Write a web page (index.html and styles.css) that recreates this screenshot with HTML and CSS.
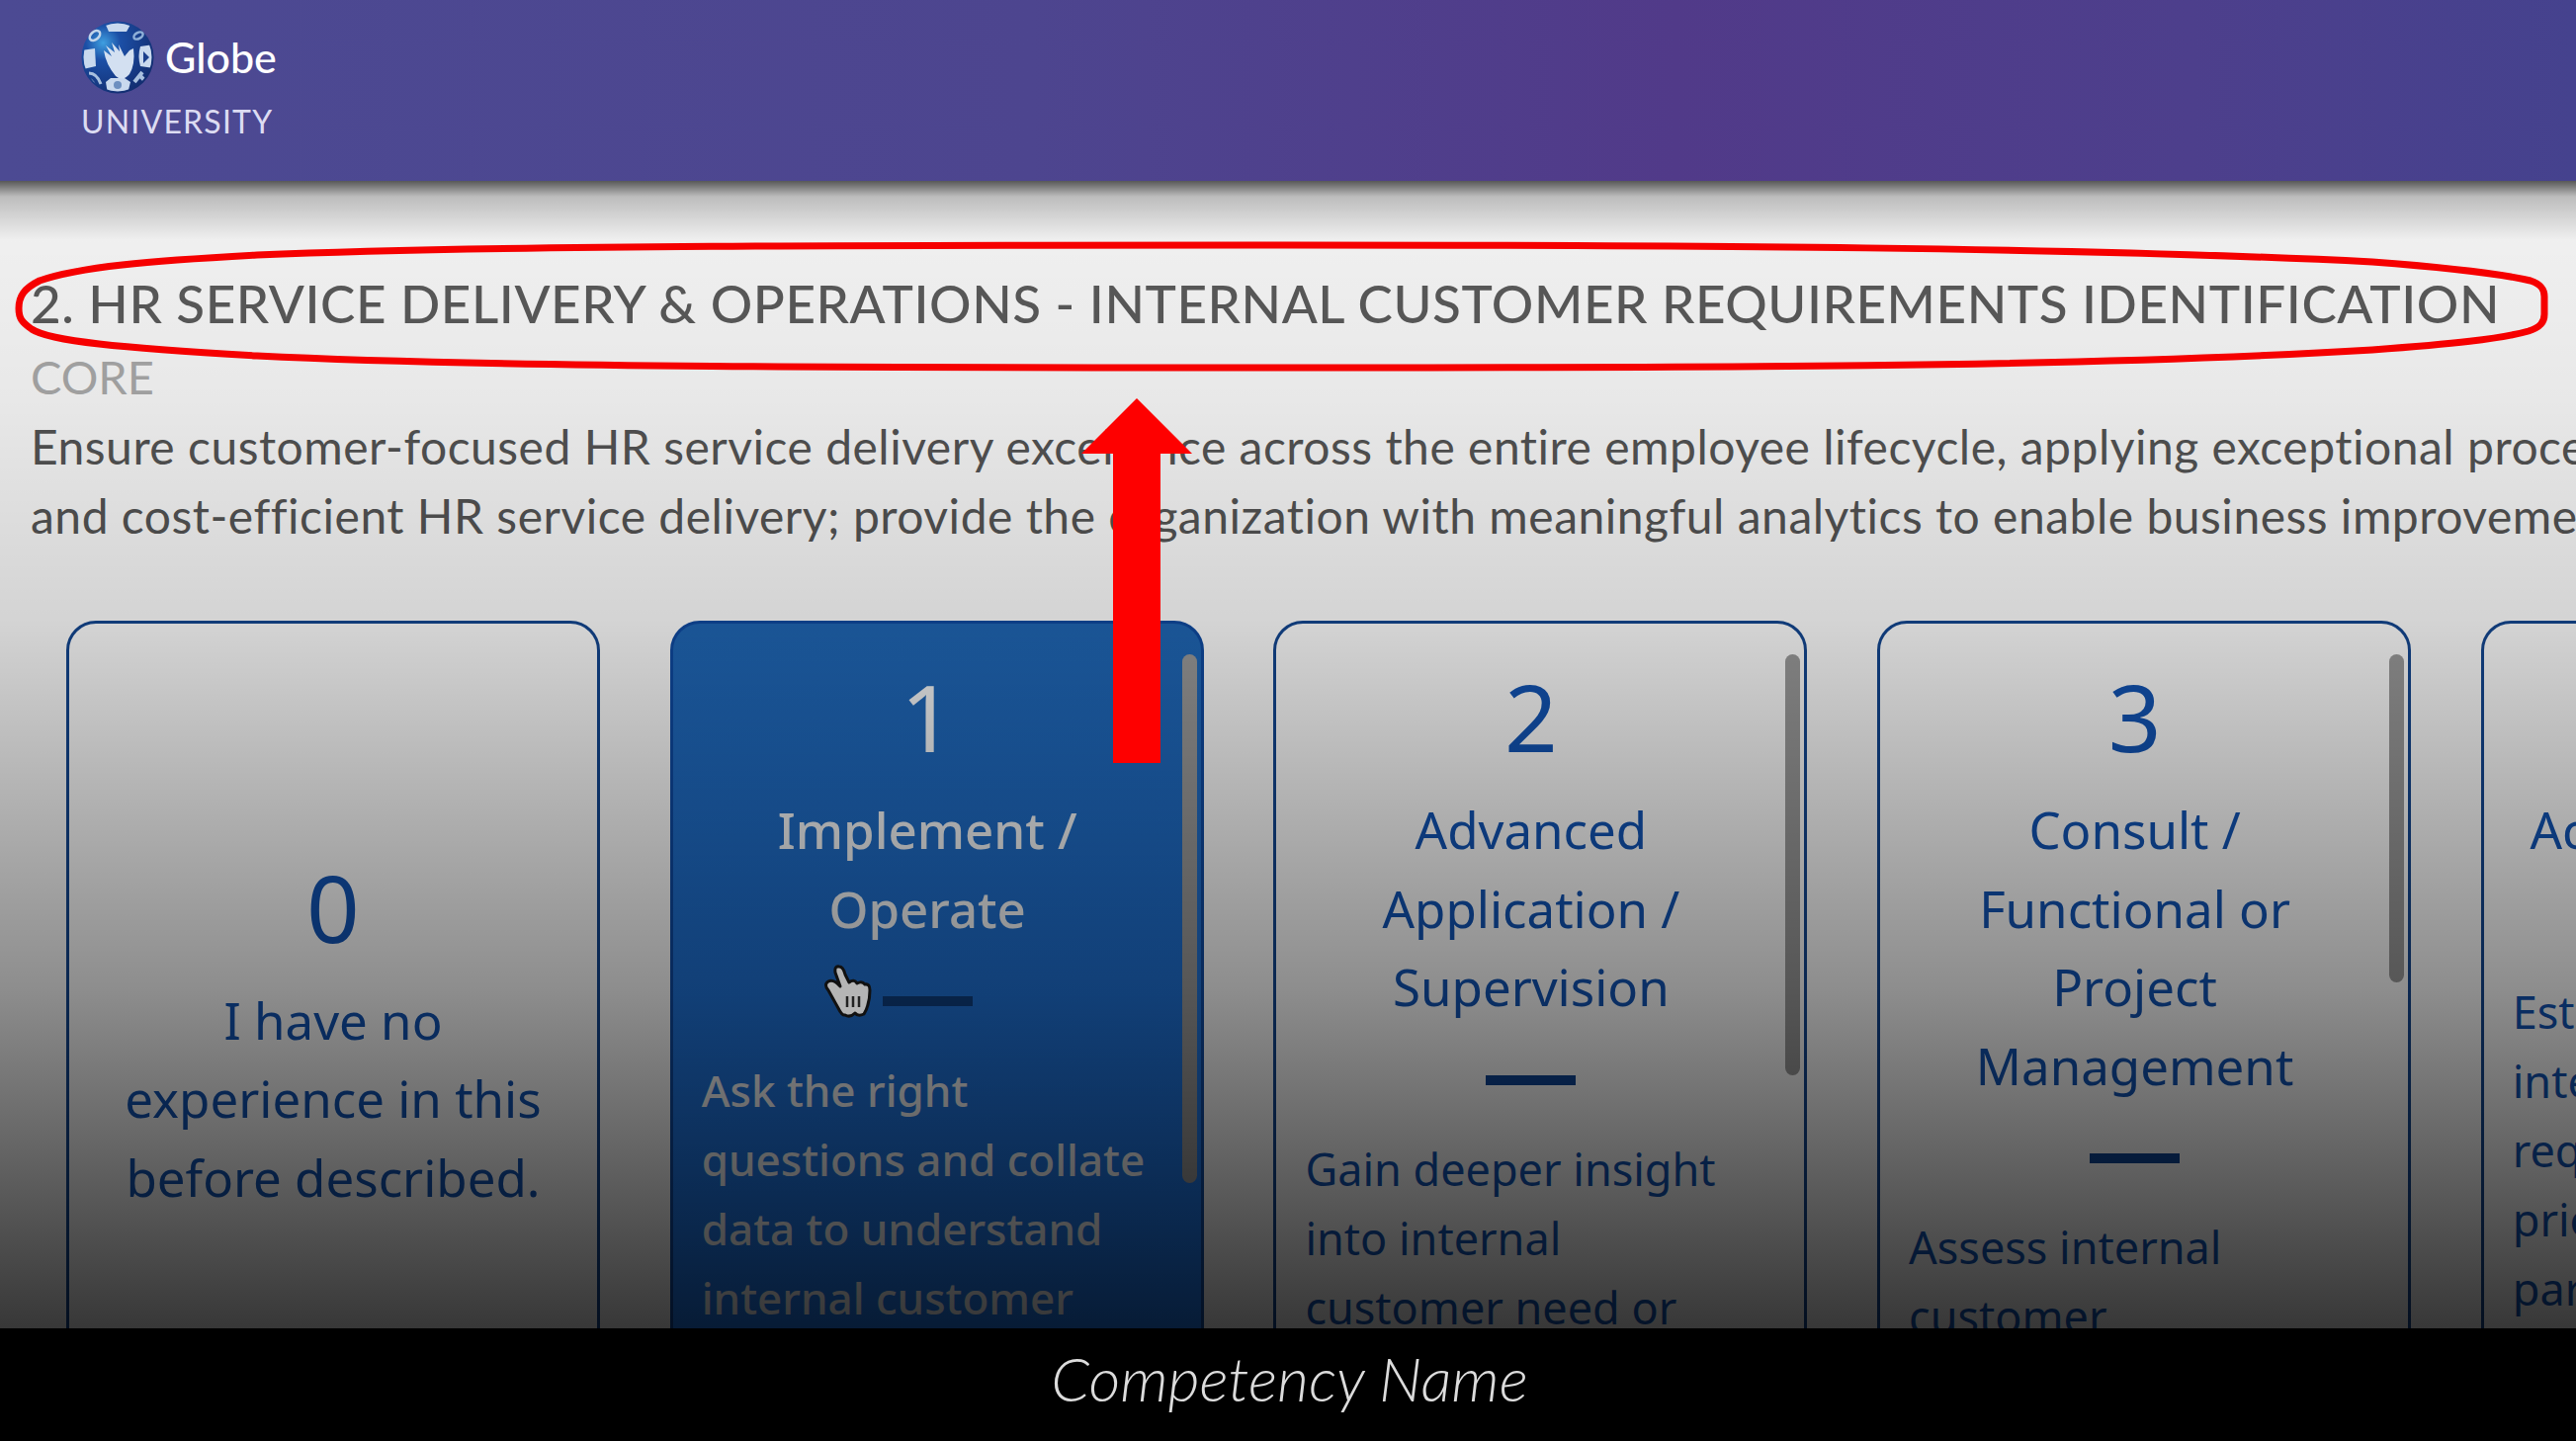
FILE: index.html
```html
<!DOCTYPE html>
<html lang="en">
<head>
    <meta charset="UTF-8">
    <title>Globe University - Competency</title>
    <link rel="stylesheet" href="styles.css">
</head>
<body>
    <div class="page">
        <header class="topbar">
            <div class="brand">
                <div class="brand-row">
                    <svg class="globe" viewBox="0 0 74 74">
                        <defs>
                            <radialGradient id="globeFill" cx="0.3" cy="0.3" r="0.8">
                                <stop offset="0" stop-color="#3f9fe0"/>
                                <stop offset="0.3" stop-color="#1c4fa6"/>
                                <stop offset="1" stop-color="#122c6e"/>
                            </radialGradient>
                            <clipPath id="globeClip">
                                <circle cx="37" cy="37" r="34.5"/>
                            </clipPath>
                        </defs>
                        <circle cx="37" cy="37" r="36.5" fill="url(#globeFill)"/>
                        <g clip-path="url(#globeClip)">
                            <path d="M24 2 H51 L46 11 H28 Z" fill="#c9d9ee"/>
                            <path d="M0 30 L14 28 L15 46 L2 49 Z" fill="#c9d9ee"/>
                            <path d="M60 26 L74 24 V48 L60 46 Q57 36 60 26 Z" fill="#c9d9ee"/>
                            <path d="M63 31 L69 37 L63 43 Z" fill="#1c3f8c"/>
                            <path d="M25 62 L30 58 H44 L50 62 L47 74 H27 Z" fill="#c9d9ee"/>
                            <circle cx="37" cy="65" r="4" fill="#6d8fc0"/>
                            <path d="M8 53 Q16 53 20 64 M5 58 Q11 59 14 66" fill="none" stroke="#a8c0de" stroke-width="3"/>
                            <path d="M54 62 L62 52 M58 54 L64 60" fill="none" stroke="#a8c0de" stroke-width="4"/>
                        </g>
                        <ellipse cx="14" cy="15" rx="6" ry="4" transform="rotate(-40 14 15)" fill="none" stroke="#c3d5ea" stroke-width="2.5"/>
                        <ellipse cx="58" cy="15" rx="5" ry="3" transform="rotate(-30 58 15)" fill="none" stroke="#8fb0d8" stroke-width="2.5"/>
                        <path d="M23 30 L31 36 L25 25 L34 32 L31 22 L39 31 L38 24 L44 36 L49 30 L53 28 Q55 44 49 54 Q42 62 35 56 Q25 44 23 30 Z" fill="#d3e0f1"/>
                    </svg>
                    <span class="brand-name">Globe</span>
                </div>
                <div class="brand-sub">UNIVERSITY</div>
            </div>
        </header>

        <main class="content">
            <h1 class="comp-title">2. HR SERVICE DELIVERY &amp; OPERATIONS - INTERNAL CUSTOMER REQUIREMENTS IDENTIFICATION</h1>
            <div class="comp-type">CORE</div>
            <p class="comp-desc">Ensure customer-focused HR service delivery excellence across the entire employee lifecycle, applying exceptional processes<br>and cost-efficient HR service delivery; provide the organization with meaningful analytics to enable business improvements</p>

            <div class="levels">
                <section class="card card-empty">
                    <div class="card-num">0</div>
                    <div class="card-name">I have no experience in this before described.</div>
                </section>

                <section class="card card-active">
                    <div class="card-body">
                        <div class="card-num">1</div>
                        <div class="card-name">Implement /<br>Operate</div>
                        <div class="card-rule"></div>
                        <p class="card-text">Ask the right questions and collate data to understand internal customer needs</p>
                    </div>
                    <div class="thumb thumb-long"></div>
                </section>

                <section class="card">
                    <div class="card-body">
                        <div class="card-num">2</div>
                        <div class="card-name">Advanced Application / Supervision</div>
                        <div class="card-rule"></div>
                        <p class="card-text">Gain deeper insight into internal customer need or requirements</p>
                    </div>
                    <div class="thumb thumb-mid"></div>
                </section>

                <section class="card">
                    <div class="card-body">
                        <div class="card-num">3</div>
                        <div class="card-name">Consult / Functional or Project Management</div>
                        <div class="card-rule"></div>
                        <p class="card-text">Assess internal customer requirements</p>
                    </div>
                    <div class="thumb thumb-short"></div>
                </section>

                <section class="card">
                    <div class="card-body">
                        <div class="card-num">4</div>
                        <div class="card-name">Accredited Expert</div>
                        <div class="card-rule"></div>
                        <p class="card-text">Establishing clear internal customer requirements and priorities with partners</p>
                    </div>
                </section>
            </div>

            <div class="shade"></div>
        </main>

        <footer class="caption">Competency Name</footer>

        <!-- annotations drawn on top of the recording -->
        <svg class="marks" viewBox="0 0 2606 1458">
            <path d="M1300 248 C1700 248 2100 250 2400 265 C2480 271 2530 277 2560 284 C2572 288 2574 294 2574 300 V318 C2574 326 2570 331 2558 335 C2530 343 2480 348 2400 354 C2100 372 1700 372 1300 372 C900 372 500 372 260 360 C120 352 50 345 32 333 C22 326 19 322 19 312 C19 300 24 292 40 284 C80 270 150 264 260 258 C500 248 900 248 1300 248 Z" fill="none" stroke="#f60000" stroke-width="7"/>
            <path d="M1150 403 L1206 459 H1174 V772 H1126 V459 H1094 Z" fill="#fe0000"/>
            <path d="M838 1002 Q833 996 838 993 Q843 990 850 998 L845 984 Q844 977 849 978 Q853 978 855 986 L859 994 Q864 990 867 995 Q872 992 875 996 Q880 995 880 1002 Q880 1016 874 1026 Q868 1029 865 1025 Q860 1030 855 1027 Q852 1028 848 1020 Z" fill="#b5b5b5" stroke="#111" stroke-width="3" stroke-linejoin="round"/>
            <path d="M857 1008 V1019 M863 1008 V1019 M869 1008 V1019" stroke="#222" stroke-width="2.5"/>
        </svg>
    </div>
</body>
</html>
```

FILE: styles.css
```css
* {
    box-sizing: border-box;
}
html, body {
    margin: 0;
    height: 100%;
    background: #000;
}
body {
    font-family: Lato, "Open Sans", sans-serif;
    overflow: hidden;
}
.page {
    position: relative;
    display: flex;
    flex-direction: column;
    width: 2606px;
    height: 1458px;
}

/* top bar */
.topbar {
    flex: 0 0 183px;
    padding: 21px 0 0 82px;
    background: linear-gradient(90deg, #4c4a93 0%, #4d458f 40%, #513a89 65%, #4d3f8c 85%, #45428e 100%);
}
.brand-row {
    display: flex;
    align-items: center;
    gap: 11px;
}
.globe {
    width: 74px;
    height: 74px;
}
.brand-name {
    margin-top: -2px;
    font-size: 43px;
    font-weight: 500;
    color: #fff;
}
.brand-sub {
    margin-top: 8px;
    font-size: 32px;
    letter-spacing: 1.2px;
    line-height: 40px;
    color: #dcdcf2;
}

/* main area */
.content {
    position: relative;
    flex: 1;
    overflow: hidden;
    padding: 94px 0 0 31px;
    background: #fcfcfc;
}
.comp-title {
    margin: 0;
    font-size: 53px;
    font-weight: 500;
    letter-spacing: 0.55px;
    line-height: 60px;
    white-space: nowrap;
    color: #5c5c5c;
}
.comp-type {
    margin-top: 14px;
    font-size: 47px;
    line-height: 60px;
    color: #acacac;
}
.comp-desc {
    margin: 6px 0 0;
    font-size: 48px;
    letter-spacing: 0.5px;
    line-height: 70px;
    white-space: nowrap;
    color: #555;
}

/* level cards */
.levels {
    display: flex;
    gap: 70.7px;
    margin: 71px 0 0 36px;
}
.card {
    position: relative;
    flex: 0 0 540px;
    height: 838px;
    overflow: hidden;
    border: 3px solid #13468f;
    border-radius: 30px;
    color: #1254b4;
    font-family: "Noto Sans", Lato, sans-serif;
}
.card-empty {
    display: flex;
    flex-direction: column;
    justify-content: center;
    padding: 0 30px;
    text-align: center;
}
.card-active {
    background: linear-gradient(180deg, #1f65b2 0%, #1f80ff 100%);
    border-color: #0f4aa0;
    color: #f4f6f8;
    font-weight: 500;
}
.card-body {
    padding: 39px 48px 0 29px;
}
.card-num {
    margin-bottom: 20px;
    font-size: 94px;
    font-weight: 400;
    line-height: 110px;
    text-align: center;
}
.card-name {
    font-size: 51px;
    line-height: 79.5px;
    text-align: center;
}
.card-rule {
    width: 91px;
    height: 10px;
    margin: 49px auto 50px;
    background: #0e4596;
}
.card-active .card-rule {
    background: #0e3f80;
}
.card-text {
    margin: 0;
    font-size: 45px;
    line-height: 70px;
}
.card-active .card-text {
    font-size: 44px;
}
.thumb {
    position: absolute;
    top: 31px;
    right: 4px;
    width: 15px;
    border-radius: 8px;
    background: #9a9a9a;
}
.thumb-long {
    height: 535px;
}
.thumb-mid {
    height: 426px;
}
.thumb-short {
    height: 332px;
}

/* the video's darkening over the whole area */
.shade {
    position: absolute;
    top: 0;
    left: 0;
    width: 100%;
    height: 100%;
    pointer-events: none;
    background: linear-gradient(180deg,
        rgba(0,0,0,0.65) 0,
        rgba(0,0,0,0.25) 16px,
        rgba(0,0,0,0.05) 60px,
        rgba(0,0,0,0.08) 217px,
        rgba(0,0,0,0.16) 445px,
        rgba(0,0,0,0.44) 817px,
        rgba(0,0,0,0.78) 100%);
}

/* subtitle */
.caption {
    flex: 0 0 114px;
    padding: 15px 0 0 3px;
    font-size: 62px;
    font-style: italic;
    font-weight: 300;
    line-height: 70px;
    text-align: center;
    color: #dcdcdc;
    background: #000;
}

.marks {
    position: absolute;
    top: 0;
    left: 0;
    width: 2606px;
    height: 1458px;
    pointer-events: none;
}
```
